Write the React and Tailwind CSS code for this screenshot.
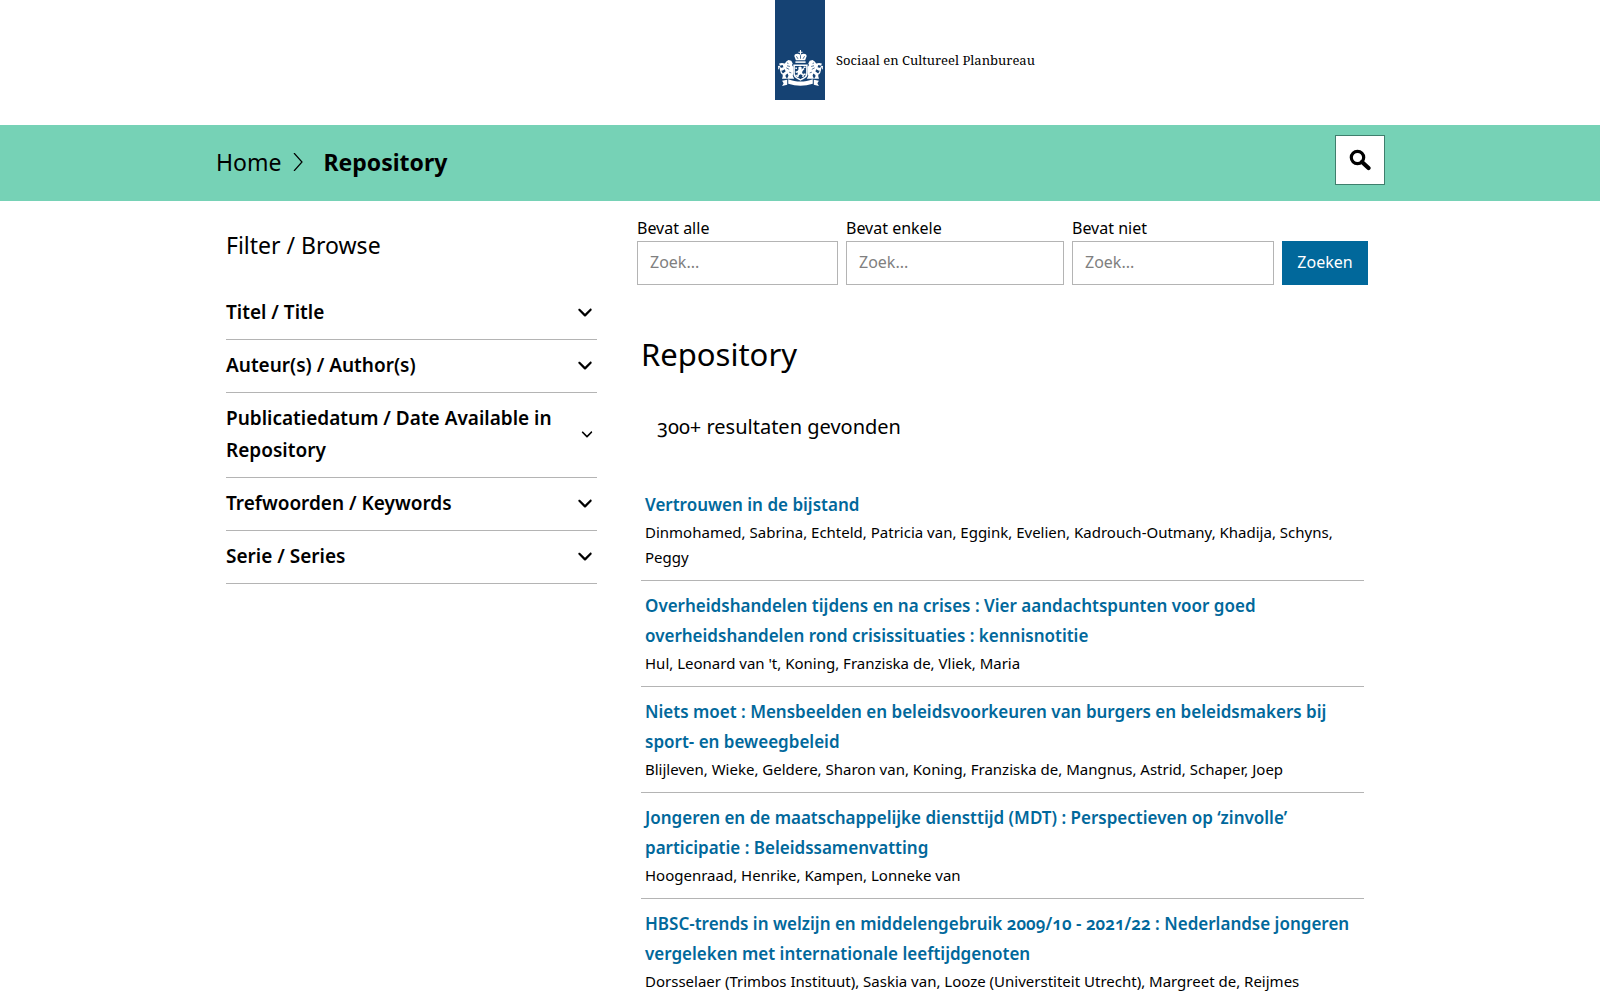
import { FaAngleDown } from 'react-icons/fa6';

const filters = [
  { name: 'Titel / Title' },
  { name: 'Auteur(s) / Author(s)' },
  { name: 'Publicatiedatum / Date Available in Repository', small: true },
  { name: 'Trefwoorden / Keywords' },
  { name: 'Serie / Series' },
];

const searchFields = [
  { id: 'all', label: 'Bevat alle', width: 'w-[201px]' },
  { id: 'some', label: 'Bevat enkele', width: 'w-[218px]' },
  { id: 'none', label: 'Bevat niet', width: 'w-[202px]' },
];

const results = [
  {
    title: 'Vertrouwen in de bijstand',
    authors: 'Dinmohamed, Sabrina, Echteld, Patricia van, Eggink, Evelien, Kadrouch-Outmany, Khadija, Schyns, Peggy',
  },
  {
    title: 'Overheidshandelen tijdens en na crises : Vier aandachtspunten voor goed overheidshandelen rond crisissituaties : kennisnotitie',
    authors: "Hul, Leonard van 't, Koning, Franziska de, Vliek, Maria",
  },
  {
    title: 'Niets moet : Mensbeelden en beleidsvoorkeuren van burgers en beleidsmakers bij sport- en beweegbeleid',
    authors: 'Blijleven, Wieke, Geldere, Sharon van, Koning, Franziska de, Mangnus, Astrid, Schaper, Joep',
  },
  {
    title: 'Jongeren en de maatschappelijke diensttijd (MDT) : Perspectieven op ‘zinvolle’ participatie : Beleidssamenvatting',
    authors: 'Hoogenraad, Henrike, Kampen, Lonneke van',
  },
  {
    title: 'HBSC-trends in welzijn en middelengebruik 2009/10 - 2021/22 : Nederlandse jongeren vergeleken met internationale leeftijdgenoten',
    authors: 'Dorsselaer (Trimbos Instituut), Saskia van, Looze (Universtiteit Utrecht), Margreet de, Reijmes (Universiteit Utrecht), Cecilia de, Roos, Simone de, Cosma (Universiteit Utrecht), Gonneke',
  },
];

function Lion({ transform }) {
  return (
    <g transform={transform}>
      <path d="M6 6l2-3 3-2 4 1 2 4-1 2 2 3v7l-1 5 2 4H9l2-4-1-3-3 2v2l2 3H2l1-3v-4l4-3-1-3-4 2-3-1 1-3 4-1-1-3-4 1-1-3 4-1z" />
      <path d="M9 9l4 1M8 12l4 2M12 18l3 1M9 5l2 1" stroke="#154273" strokeWidth="1" />
      <path d="M3 21C-1 18 1 14-1 11s-3 1-2 3" fill="none" stroke="currentColor" strokeWidth="1.8" />
    </g>
  );
}

function CoatOfArms() {
  return (
    <svg viewBox="0 0 88 72" className="h-[37px] w-[45px] text-white" fill="currentColor" aria-hidden="true">
      <path d="M43 0h2v3h3v2h-3v4h-2V5h-3V3h3z" />
      <path d="M32 12c0-5 6-6 12-3 6-3 12-2 12 3l-3 8H35z" />
      <path d="M36 12l3 5M44 10v7M52 12l-3 5" stroke="#154273" strokeWidth="1.5" />
      <path d="M34 22h20v3H34z" />
      <path d="M30 28h28v18c0 8-8 11-14 14-6-3-14-6-14-14z" />
      <path d="M33 31h22v15c0 6-6 8-11 11-5-3-11-5-11-11z" fill="#154273" />
      <path d="M40 33l4-1 3 3-2 3 5-3 2 2-4 4-1 4 4 3-1 5-3-1 1-3-4-2-3 2-1 4-4-1 2-4 1-4-4 1-1-3 4-1 2-3z" />
      <path d="M34 34h3v3h-3zM50 32h4v3h-4zM34 48h3v3h-3zM50 46h4v3h-4z" />
      <Lion transform="translate(5 18) scale(1.4)" />
      <Lion transform="translate(83 18) scale(-1.4 1.4)" />
      <path d="M20 57c16 6 32 6 48 0v9c-16 5-32 5-48 0z" />
      <path d="M8 60l10-2v10l-10 2 3-5zM80 60l-10-2v10l10 2-3-5z" />
    </svg>
  );
}

function Header() {
  return (
    <header className="pb-[25px]">
      <a href="#" className="grid grid-cols-[1fr_50px_1fr]">
        <span className="col-start-2 flex h-[100px] items-end justify-center bg-[#154273] pb-[13px]">
          <CoatOfArms />
        </span>
        <span className="ml-[11px] mt-[50px] whitespace-nowrap font-['Noto_Serif','Liberation_Serif',serif] text-[13px] leading-[20px]">
          Sociaal en Cultureel Planbureau
        </span>
      </a>
    </header>
  );
}

function BreadcrumbBar() {
  return (
    <div className="bg-[#76d2b6]">
      <div className="mx-auto flex h-[76px] max-w-[1170px] items-start justify-between pl-px">
        <nav aria-label="Kruimelpad" className="flex items-center pt-[19px] text-[23px] leading-[36px]">
          <a href="#">Home</a>
          <svg viewBox="0 0 10 18" className="mx-3 h-[18px] w-[10px]" fill="none" stroke="currentColor" strokeWidth="1.2" aria-hidden="true">
            <path d="M1 0l8 9-8 9" />
          </svg>
          <span className="ml-2 font-bold" aria-current="page">Repository</span>
        </nav>
        <button type="button" aria-label="Zoeken op de site" className="mt-[10px] flex size-[50px] items-center justify-center border border-[#3f7f6d] bg-white">
          <svg viewBox="0 0 22 22" className="size-[22px]" fill="none" stroke="currentColor" aria-hidden="true">
            <circle cx="8.5" cy="8.5" r="6.2" strokeWidth="3.2" />
            <path d="M13 13l6.5 6" strokeWidth="4.2" strokeLinecap="round" />
          </svg>
        </button>
      </div>
    </div>
  );
}

function Filters() {
  return (
    <aside className="w-[371px] shrink-0 pt-[26px]">
      <h2 className="text-[23px] leading-[36px]">Filter / Browse</h2>
      <div className="mt-6">
        {filters.map(({ name, small }) => (
          <button key={name} type="button" aria-expanded="false" className="flex w-full items-center justify-between border-b border-[#b4b4b4] pb-[11px] pt-[9px] text-left text-[19px] font-semibold leading-[32px]">
            <span className="max-w-[330px]">{name}</span>
            <FaAngleDown className={small ? 'mr-[3px] size-[14px] shrink-0' : 'mr-[3px] size-[18px] shrink-0'} />
          </button>
        ))}
      </div>
    </aside>
  );
}

function SearchForm() {
  return (
    <form className="flex items-end gap-2 text-[16px]" onSubmit={(e) => e.preventDefault()}>
      {searchFields.map((field) => (
        <div key={field.id} className={field.width}>
          <label htmlFor={field.id} className="block pb-px leading-[24px]">{field.label}</label>
          <input id={field.id} type="text" placeholder="Zoek..." className="h-[44px] w-full border border-[#b4b4b4] px-3 pb-[2px] placeholder:text-[#808080]" />
        </div>
      ))}
      <button type="submit" className="h-[44px] w-[86px] bg-[#01689b] pb-[2px] text-white">Zoeken</button>
    </form>
  );
}

function Results() {
  return (
    <ul>
      {results.map((item) => (
        <li key={item.title} className="border-b border-[#b4b4b4] px-1 pb-[10px] pt-[10px]">
          <a href="#" className="block text-[17px] font-semibold leading-[30px] text-[#01689b]">{item.title}</a>
          <p className="text-[15px] leading-[25px]">{item.authors}</p>
        </li>
      ))}
    </ul>
  );
}

export default function App() {
  return (
    <div className="min-h-screen bg-white font-['Noto_Sans','Open_Sans',sans-serif] text-black oldstyle-nums">
      <Header />
      <BreadcrumbBar />
      <div className="mx-auto flex max-w-[1148px] justify-between">
        <Filters />
        <main className="w-[737px] pt-[15px]">
          <SearchForm />
          <div className="mx-1 max-w-[723px]">
            <h1 className="mt-[45px] text-[31px] leading-[48px]">Repository</h1>
            <p className="ml-4 mt-[33px] text-[20px] leading-[32px]">300+ resultaten gevonden</p>
            <div className="mt-[37px]">
              <Results />
            </div>
          </div>
        </main>
      </div>
    </div>
  );
}
